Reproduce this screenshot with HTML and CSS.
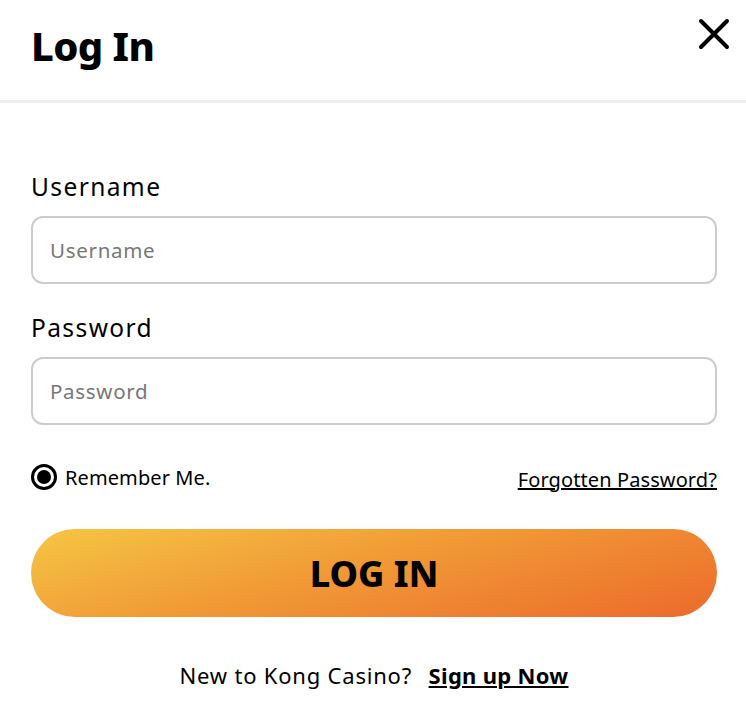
FILE: index.html
```html
<!doctype html>
<html lang="en">
<head>
  <meta charset="utf-8">
  <title>Log In</title>
  <link rel="stylesheet" href="styles.css">
</head>
<body>
<header class="modal-head">
  <h1>Log In</h1>
  <button class="close" aria-label="Close">
    <svg width="32" height="32" viewBox="0 0 32 32"><path d="M3 3 L29 29 M29 3 L3 29" stroke="#000" stroke-width="4" stroke-linecap="round"/></svg>
  </button>
</header>

<form class="login">
  <label for="username">Username</label>
  <input id="username" type="text" placeholder="Username">

  <label for="password" class="second">Password</label>
  <input id="password" type="password" placeholder="Password">

  <div class="options">
    <label class="remember"><span class="radio"></span>Remember Me.</label>
    <a href="#" class="forgot">Forgotten Password?</a>
  </div>

  <button type="button" class="submit">LOG IN</button>

  <p class="signup">New to Kong Casino? <a href="#">Sign up Now</a></p>
</form>
</body>
</html>
```

FILE: styles.css
```css
* {
  box-sizing: border-box;
  margin: 0;
  padding: 0;
}
body {
  background: #fff;
  color: #000;
  font-family: 'Noto Sans', 'Open Sans', sans-serif;
}
.modal-head {
  display: flex;
  justify-content: space-between;
  align-items: flex-start;
  height: 103px;
  padding: 0 16px 0 31px;
  border-bottom: 3px solid #eeeeee;
}
.modal-head h1 {
  font-size: 40px;
  font-weight: 800;
  line-height: 92px;
  letter-spacing: -0.6px;
}
.close {
  background: none;
  border: none;
  margin-top: 18px;
  cursor: pointer;
}
.login {
  display: flex;
  flex-direction: column;
  padding: 69px 29px 0 31px;
}
.login > label {
  font-size: 24.5px;
  line-height: 30px;
  letter-spacing: 1.4px;
  margin-bottom: 14px;
}
.login > label.second {
  margin-top: 29px;
}
.login input {
  height: 68px;
  border: 2px solid #cccccc;
  border-radius: 12px;
  padding: 0 17px;
  font-family: inherit;
  font-size: 20.5px;
  letter-spacing: 0.7px;
  color: #000;
}
.login input::placeholder {
  color: #777;
}
.options {
  display: flex;
  justify-content: space-between;
  align-items: center;
  margin-top: 37px;
  height: 30px;
}
.remember {
  display: flex;
  align-items: center;
  gap: 8px;
  font-size: 20px;
  letter-spacing: 0.1px;
}
.radio {
  width: 26px;
  height: 26px;
  border: 3px solid #000;
  border-radius: 50%;
  display: flex;
  align-items: center;
  justify-content: center;
}
.radio::after {
  content: '';
  width: 14px;
  height: 14px;
  border-radius: 50%;
  background: #000;
}
.forgot {
  color: #000;
  font-size: 20px;
  letter-spacing: 0.1px;
  margin-top: 4px;
}
.submit {
  margin-top: 37px;
  height: 88px;
  border: none;
  border-radius: 44px;
  background: linear-gradient(165deg, #f5c644 0%, #f19a36 45%, #ec6a2c 100%);
  font-family: inherit;
  font-size: 36px;
  font-weight: 800;
  color: #000;
  cursor: pointer;
}
.signup {
  margin-top: 43px;
  text-align: center;
  font-size: 22px;
  line-height: 30px;
  letter-spacing: 0.8px;
}
.signup a {
  color: #000;
  font-weight: 700;
  letter-spacing: 0.3px;
  margin-left: 10px;
}
```
